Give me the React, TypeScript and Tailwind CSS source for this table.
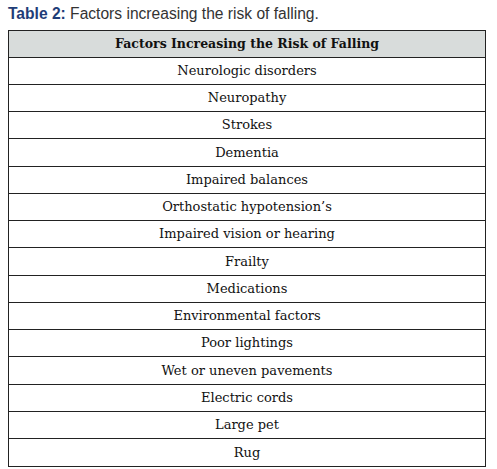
const factors = [
  "Neurologic disorders",
  "Neuropathy",
  "Strokes",
  "Dementia",
  "Impaired balances",
  "Orthostatic hypotension’s",
  "Impaired vision or hearing",
  "Frailty",
  "Medications",
  "Environmental factors",
  "Poor lightings",
  "Wet or uneven pavements",
  "Electric cords",
  "Large pet",
  "Rug",
];

export default function App() {
  return (
    <div className="w-[497px] h-[469px] bg-white pl-2 pr-[11px] pt-[5px]">
      {/* Caption */}
      <p className="font-['Liberation_Sans',Arial,sans-serif] text-[15.6px] leading-[18px] text-[#333]">
        <span className="font-bold text-[#1f3d78]">Table 2:</span> Factors increasing the risk of falling.
      </p>

      {/* Table */}
      <div className="mt-[7px] border border-[#222] font-['DejaVu_Serif',serif] text-[13px] text-[#111]">
        <div className="h-[27px] flex items-center justify-center bg-[#d8dcdb] border-b border-[#222] font-bold text-[12.5px]">
          Factors Increasing the Risk of Falling
        </div>
        {factors.map((f, i) => (
          <div
            key={f}
            className={`flex items-center justify-center ${i % 4 === 3 ? "h-[28px]" : "h-[27px]"} ${
              i < factors.length - 1 ? "border-b border-[#222]" : ""
            }`}
          >
            {f}
          </div>
        ))}
      </div>
    </div>
  );
}
